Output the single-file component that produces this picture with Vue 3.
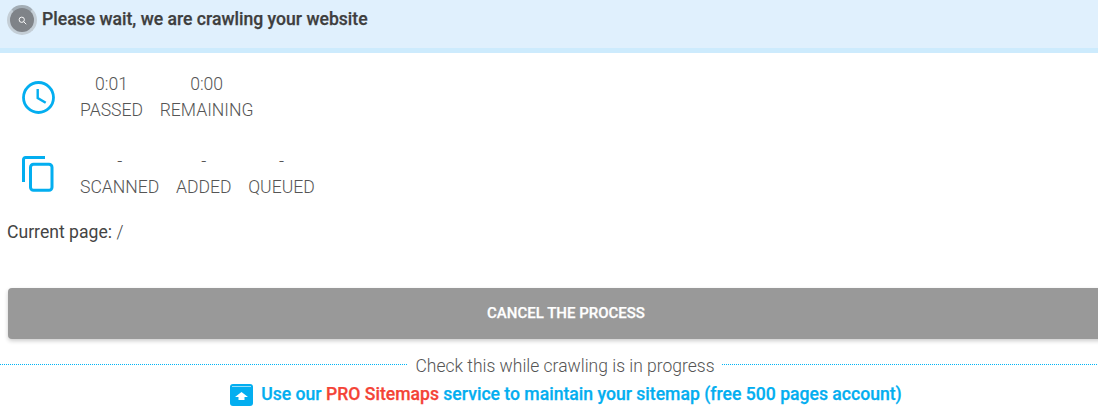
<template>
  <div class="page">
    <!-- Bandeau d'état -->
    <header class="banner">
      <span class="spinner">
        <svg width="9" height="9" viewBox="0 0 24 24" fill="none" stroke="#fff" stroke-width="2.500">
          <circle cx="10" cy="10" r="7" />
          <path d="M15 15l7 7" />
        </svg>
      </span>
      <h1 class="banner__title">Please wait, we are crawling your website</h1>
    </header>

    <!-- Compteurs -->
    <section class="stats">
      <div class="stats__row">
        <svg class="stats__icon" width="33" height="33" viewBox="0 0 33 33" fill="none" stroke="#03aef0">
          <circle cx="16.5" cy="16.500" r="15" stroke-width="2.800" />
          <path d="M15.700 8v9l8 4.800" stroke-width="2.400" />
        </svg>
        <div v-for="item in timeStats" :key="item.label" class="stat">
          <span class="stat__value">{{ item.value }}</span>
          <span class="stat__label">{{ item.label }}</span>
        </div>
      </div>
      <div class="stats__row stats__row--pages">
        <svg class="stats__icon" width="33" height="36" viewBox="0 0 33 36" fill="none" stroke="#03aef0" stroke-width="3">
          <path d="M1.500 26V3.500a2 2 0 0 1 2-2H23" />
          <rect x="8.500" y="8.200" width="21.500" height="26" rx="3" />
        </svg>
        <div v-for="item in pageStats" :key="item.label" class="stat">
          <span class="stat__value">{{ item.value }}</span>
          <span class="stat__label">{{ item.label }}</span>
        </div>
      </div>
      <p class="current">Current page: <span class="current__path">/</span></p>
    </section>

    <button class="cancel" type="button">CANCEL THE PROCESS</button>

    <div class="divider">
      <span class="divider__line" />
      <span class="divider__text">Check this while crawling is in progress</span>
      <span class="divider__line" />
    </div>

    <p class="promo">
      <svg class="promo__icon" width="23" height="22" viewBox="0 0 23 22">
        <rect width="23" height="22" rx="3" fill="#03aef0" />
        <path d="M2 2.500h19" stroke="#fff" stroke-width="0.600" />
        <path d="M11.500 8l6.500 5h-3.500v3h-6v-3H5z" fill="#fff" />
      </svg>
      <a class="promo__link">Use our <span class="promo__pro">PRO Sitemaps</span> service to maintain your sitemap (free 500 pages account)</a>
    </p>
  </div>
</template>

<script setup>
const timeStats = [
  { value: '0:01', label: 'PASSED' },
  { value: '0:00', label: 'REMAINING' },
]

const pageStats = [
  { value: '-', label: 'SCANNED' },
  { value: '-', label: 'ADDED' },
  { value: '-', label: 'QUEUED' },
]
</script>

<style>
html, body {
  overflow: hidden;
  background: #fff;
}
</style>

<style scoped>
.page {
  width: 1132px;
  font-family: Roboto, "Liberation Sans", sans-serif;
  font-size: 17.6px;
  color: #444;
}

/* ── Bandeau ─────────────────────────────────────────────────── */
.banner {
  display: flex;
  align-items: flex-start;
  gap: 5px;
  height: 43px;
  padding: 5px 0 0 7px;
  background: #e0f0fd;
  border-bottom: 5px solid #cdebfd;
}
.spinner {
  display: flex;
  align-items: center;
  justify-content: center;
  width: 30px;
  height: 30px;
  box-sizing: border-box;
  border: 3px solid #c4ced6;
  border-top-color: #a3adb5;
  border-radius: 50%;
  background: #7f8388;
}
.banner__title {
  margin: 0;
  font-size: 17.6px;
  font-weight: 500;
  line-height: 29px;
  color: #3e3e3e;
  -webkit-text-stroke: 0.25px currentColor;
}

/* ── Compteurs ───────────────────────────────────────────────── */
.stats {
  padding: 18px 0 0 22px;
}
.stats__row {
  display: flex;
  gap: 16.6px;
  height: 77px;
}
.stats__row--pages {
  height: 72px;
}
.stats__icon {
  margin: 10px 8.400px 0 0;
  flex: none;
}
.stats__row--pages .stats__icon {
  margin-top: 8px;
}
.stat {
  display: flex;
  flex-direction: column;
  align-items: center;
  font-weight: 300;
  line-height: 26px;
  color: #555;
}
.current {
  margin: 0 0 0 -15px;
  line-height: 24px;
  color: #444;
}
.current__path {
  font-weight: 300;
}

/* ── Bouton ──────────────────────────────────────────────────── */
.cancel {
  display: block;
  width: 1116px;
  height: 51px;
  margin: 44px 0 0 8px;
  padding: 0 0 2px;
  border: 0;
  border-radius: 4px;
  background: #999;
  color: #fff;
  font: 500 15px Roboto, sans-serif;
  -webkit-text-stroke: 0.25px currentColor;
  box-shadow: 0 2px 4px rgba(0, 0, 0, 0.2);
}

/* ── Pied ────────────────────────────────────────────────────── */
.divider {
  display: flex;
  align-items: center;
  gap: 7px;
  width: 1130px;
  margin-top: 13px;
  height: 24px;
}
.divider__line {
  flex: 1;
  height: 1px;
  background: repeating-linear-gradient(to right, #00b4f5 0 1px, transparent 1px 2px);
}
.divider__text {
  width: 300px;
  padding-top: 4px;
  font-size: 17.5px;
  font-weight: 300;
  text-align: center;
  color: #555;
}
.promo {
  display: flex;
  align-items: center;
  justify-content: center;
  gap: 8px;
  margin: 5px 0 0;
  font-weight: 500;
  line-height: 24px;
  -webkit-text-stroke: 0.25px currentColor;
}
.promo__icon {
  flex: none;
  margin-top: 3px;
}
.promo__link {
  color: #03aef0;
}
.promo__pro {
  color: #f44336;
}
</style>
